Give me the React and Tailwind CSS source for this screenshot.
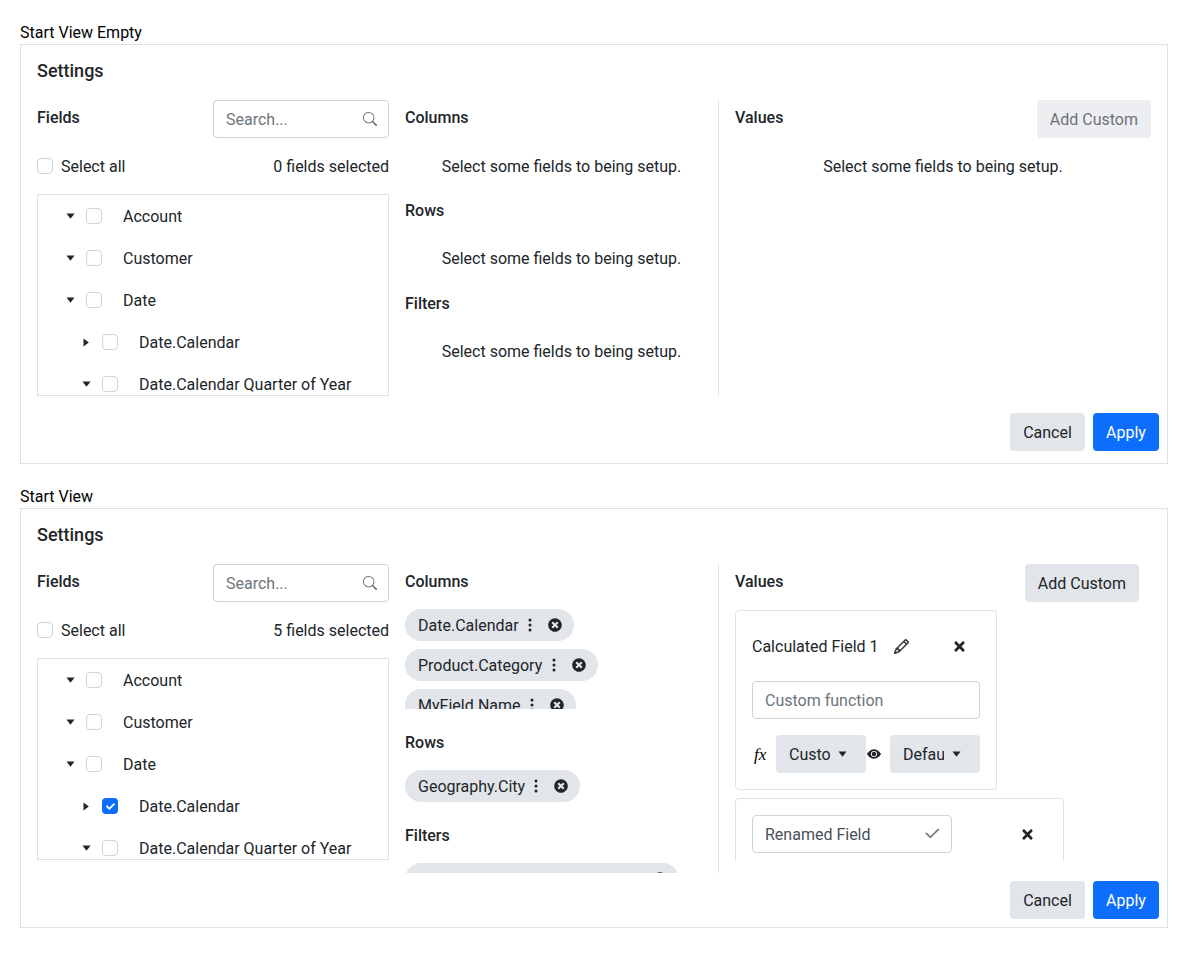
import { BsCheck2, BsEyeFill, BsPencil, BsSearch, BsThreeDotsVertical } from "react-icons/bs";
import { FaCheck, FaTimes, FaTimesCircle } from "react-icons/fa";

const treeItems = [
  { label: "Account", depth: 0, open: true },
  { label: "Customer", depth: 0, open: true },
  { label: "Date", depth: 0, open: true },
  { label: "Date.Calendar", depth: 1, open: false, checkable: true },
  { label: "Date.Calendar Quarter of Year", depth: 1, open: true },
];

function CaretDown() {
  return (
    <svg width="9" height="6" viewBox="0 0 9 6" className="shrink-0">
      <polygon points="0.5,0.5 8.5,0.5 4.5,5.8" fill="currentColor" />
    </svg>
  );
}

function CaretRight() {
  return (
    <svg width="6" height="9" viewBox="0 0 6 9" className="shrink-0">
      <polygon points="0.5,0.5 5.8,4.5 0.5,8.5" fill="currentColor" />
    </svg>
  );
}

function Checkbox({ checked }) {
  if (checked) {
    return (
      <span className="flex h-4 w-4 shrink-0 items-center justify-center rounded-[4px] bg-[#0d6efd] text-white">
        <FaCheck size={9} />
      </span>
    );
  }
  return <span className="block h-4 w-4 shrink-0 rounded-[4px] border border-[#ced4da] bg-white" />;
}

function Tree({ checkedCalendar }) {
  return (
    <div className="h-[202px] overflow-hidden border border-[#dee2e6]">
      {treeItems.map((item) => (
        <div key={item.label} className={`flex h-[42px] items-center ${item.depth ? "pl-[43px]" : "pl-[27px]"}`}>
          <span className="flex w-[10px] justify-center text-[#212529]">
            {item.open ? <CaretDown /> : <CaretRight />}
          </span>
          <span className="ml-[11px]">
            <Checkbox checked={checkedCalendar && !!item.checkable} />
          </span>
          <span className="ml-[21px] whitespace-nowrap">{item.label}</span>
        </div>
      ))}
    </div>
  );
}

function FieldsColumn({ count, checkedCalendar }) {
  return (
    <div className="mr-4 w-[352px] shrink-0">
      <div className="flex h-[38px] justify-between">
        <div className="h-6 pt-[5px] font-medium">Fields</div>
        <div className="flex w-[176px] items-center rounded-[4px] border border-[#ced4da] pl-3 pr-[11px]">
          <input
            placeholder="Search..."
            className="w-full min-w-0 bg-transparent outline-none placeholder:text-[#6c757d]"
          />
          <BsSearch size={14} className="shrink-0 text-[#6c757d]" />
        </div>
      </div>
      <div className="mt-4 flex h-6 items-center justify-between">
        <div className="flex items-center gap-2">
          <Checkbox />
          <span>Select all</span>
        </div>
        <span>{count} fields selected</span>
      </div>
      <div className="mt-4">
        <Tree checkedCalendar={checkedCalendar} />
      </div>
    </div>
  );
}

function EmptyText() {
  return <div className="h-6 text-center">Select some fields to being setup.</div>;
}

function EmptyMiddle() {
  return (
    <div className="w-[314px] shrink-0 border-r border-[#dee2e6] pt-[5px]">
      {["Columns", "Rows", "Filters"].map((title) => (
        <div key={title} className="h-[93px]">
          <div className={`h-6 font-medium ${title === "Columns" ? "mb-[25px]" : "mb-6"}`}>{title}</div>
          <EmptyText />
        </div>
      ))}
    </div>
  );
}

function Chip({ label, width }) {
  return (
    <div
      className="flex h-8 shrink-0 items-center rounded-full bg-[#e2e6ea] pl-[13px] pr-[12px] text-[#212529]"
      style={{ width }}
    >
      <span className="min-w-0 flex-1 overflow-hidden whitespace-nowrap">{label}</span>
      {label && <BsThreeDotsVertical size={16} className="ml-[3px] shrink-0" />}
      <FaTimesCircle size={14} className="ml-[10px] shrink-0" />
    </div>
  );
}

function FilledMiddle() {
  return (
    <div className="h-[309px] w-[314px] shrink-0 overflow-hidden border-r border-[#dee2e6] pt-[5px]">
      <div className="h-6 font-medium">Columns</div>
      <div className="mt-4 flex h-[100px] flex-col gap-2 overflow-hidden">
        <Chip label="Date.Calendar" width={169} />
        <Chip label="Product.Category" width={193} />
        <Chip label="MyField.Name" width={171} />
      </div>
      <div className="mt-[21px] h-6 font-medium">Rows</div>
      <div className="mt-4">
        <Chip label="Geography.City" width={175} />
      </div>
      <div className="mt-[21px] h-6 font-medium">Filters</div>
      <div className="mt-4">
        <Chip label="" width={274} />
      </div>
    </div>
  );
}

function SelectButton({ label }) {
  return (
    <div className="flex h-[38px] w-[90px] items-center rounded-[4px] bg-[#e2e6ea] pl-[13px]">
      <span className="w-[41px] overflow-hidden whitespace-nowrap">{label}</span>
      <span className="ml-[8px] flex">
        <CaretDown />
      </span>
    </div>
  );
}

function ValueCards() {
  return (
    <div className="mt-2 h-[250px] overflow-hidden">
      <div className="h-[180px] w-[262px] rounded-[4px] border border-[#dee2e6] p-4">
        <div className="flex h-[38px] items-center">
          <span className="whitespace-nowrap">Calculated Field 1</span>
          <BsPencil size={15} strokeWidth={0.6} className="ml-[15px] shrink-0" />
          <FaTimes size={15} className="ml-[43px] shrink-0" />
        </div>
        <input
          placeholder="Custom function"
          className="mt-4 block h-[38px] w-full rounded-[4px] border border-[#ced4da] px-3 outline-none placeholder:text-[#6c757d]"
        />
        <div className="mt-4 flex items-center">
          <span className="ml-[2px] w-[22px] font-['Liberation_Serif',serif] text-[17px] italic text-black">fx</span>
          <SelectButton label="Custom" />
          <span className="ml-px flex w-[23px]">
            <BsEyeFill size={14} />
          </span>
          <SelectButton label="Default" />
        </div>
      </div>
      <div className="mt-2 h-[100px] w-[329px] rounded-[4px] border border-[#dee2e6] p-4">
        <div className="flex items-center">
          <div className="flex h-[38px] w-[200px] items-center justify-between rounded-[4px] border border-[#ced4da] pl-3 pr-[10px] text-[#495057]">
            <span>Renamed Field</span>
            <BsCheck2 size={18} strokeWidth={0.6} className="text-[#6c757d]" />
          </div>
          <FaTimes size={15} className="ml-[68px] shrink-0" />
        </div>
      </div>
    </div>
  );
}

function SettingsCard({ filled }) {
  return (
    <div className="h-[420px] border border-[#dee2e6]">
      <div className="flex h-[55px] items-start px-4 pt-3">
        <div className="text-[18px] font-medium leading-[27px]">Settings</div>
      </div>
      <div className="flex pl-4">
        <FieldsColumn count={filled ? 5 : 0} checkedCalendar={filled} />
        {filled ? <FilledMiddle /> : <EmptyMiddle />}
        <div className={`w-[432px] pl-4 ${filled ? "pr-3" : ""}`}>
          <div className="flex h-[38px] justify-between">
            <div className="h-6 pt-[5px] font-medium">Values</div>
            {filled ? (
              <button className="h-[38px] rounded-[4px] bg-[#e2e6ea] px-[13px]">Add Custom</button>
            ) : (
              <button disabled className="h-[38px] rounded-[4px] bg-[#e2e6ea] px-[13px] opacity-65">
                Add Custom
              </button>
            )}
          </div>
          {filled ? (
            <ValueCards />
          ) : (
            <div className="mt-4">
              <EmptyText />
            </div>
          )}
        </div>
      </div>
      <div className={`flex justify-end gap-2 pr-2 ${filled ? "pt-2" : "pt-[17px]"}`}>
        <button className="h-[38px] w-[75px] rounded-[4px] bg-[#e2e6ea]">Cancel</button>
        <button className="h-[38px] w-[66px] rounded-[4px] bg-[#0d6efd] text-white">Apply</button>
      </div>
    </div>
  );
}

export default function App() {
  return (
    <div className="min-h-[968px] bg-white px-5 pt-5 font-['Roboto',sans-serif] text-base leading-[25px] text-[#212529]">
      <div className="h-6 text-black">Start View Empty</div>
      <SettingsCard />
      <div className="mt-5 h-6 text-black">Start View</div>
      <SettingsCard filled />
    </div>
  );
}
